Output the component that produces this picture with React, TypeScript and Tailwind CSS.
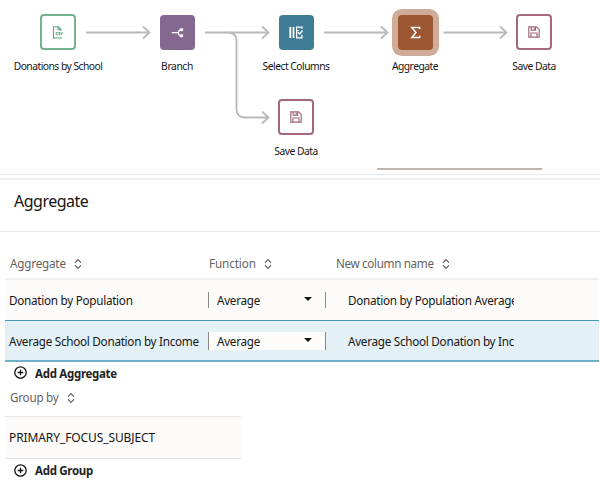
import React from 'react';
import clsx from 'clsx';

interface FlowNodeProps {
  label: string;
  position: string;
  box: string;
  tracking: string;
  children: React.ReactNode;
}

const FlowNode: React.FC<FlowNodeProps> = ({ label, position, box, tracking, children }) => (
  <div className={clsx('absolute w-[120px] flex flex-col items-center', position)}>
    <div className={clsx('rounded-[4px] flex items-center justify-center', box)}>{children}</div>
    <div className={clsx('mt-[9px] text-[10.3px] leading-[14px] text-[#161513] whitespace-nowrap', tracking)}>{label}</div>
  </div>
);

const SaveIcon: React.FC = () => (
  <svg width="12" height="12" viewBox="0 0 12 12" fill="none" stroke="#a06a7a" strokeWidth="1.2">
    <path d="M.8.8h7.800l2.600 2.600v7.800H.8z" />
    <path d="M3.200 1v3.200h4.400V1M3 11V7h6v4M6.300 1.600v1.600" />
  </svg>
);

const CsvIcon: React.FC = () => (
  <svg width="12" height="13" viewBox="0 0 12 13" fill="none" stroke="#5fa67c" strokeWidth="1.1">
    <path d="M9 11v1H1.500V.8h4.800L9 3.500V5M6 1v2.800h3" />
    <path d="M5.600 6.500H4.100v2.200h1.500M8 6.500H6.700v1h1.200v1.200H6.500M8.800 6.300l.8 2.300.9-2.300" strokeWidth="1" />
  </svg>
);

const BranchIcon: React.FC = () => (
  <svg width="13" height="12" viewBox="0 0 13 12" fill="none" stroke="#fff" strokeWidth="1.2">
    <path d="M.8 5.700h6.700M10 2.800H9L7.500 4.500v2.800L9 8.900h1" />
    <path d="M9.500 1.500h2.300v2.400H9.500zM9.500 7.600h2.300V10H9.500z" fill="#fff" strokeWidth=".5" />
  </svg>
);

const ColumnsIcon: React.FC = () => (
  <svg width="14" height="13" viewBox="0 0 14 13" fill="none" stroke="#fff" strokeWidth="1.2">
    <path d="M1.300 1v11M4.500 1v11" strokeWidth="1.800" />
    <path d="M13 3V1.200H7.600v10.600H13V9M7.600 4.500h2" />
    <path d="M8.600 6l2.200 2 2.800-3.500" strokeWidth="1.400" />
  </svg>
);

const SigmaIcon: React.FC = () => (
  <svg width="11" height="13" viewBox="0 0 11 13" fill="none" stroke="#fff" strokeWidth="1.500">
    <path d="M9.700 3V1.500H1.800L6 6.400l-4.200 5h7.900V9.800" />
  </svg>
);

const SortIcon: React.FC = () => (
  <svg width="8" height="10" viewBox="0 0 8 10" fill="none" stroke="#55524f" strokeWidth="1.1">
    <path d="M1 3.700l3-3 3 3M1 6.300l3 3 3-3" />
  </svg>
);

const AddButton: React.FC<{ label: string; className: string }> = ({ label, className }) => (
  <button className={clsx('flex items-center pl-[14px]', className)}>
    <svg className="-mt-[2px]" width="13" height="13" viewBox="0 0 13 13" fill="none" stroke="#161513" strokeWidth="1.3">
      <circle cx="6.500" cy="6.500" r="5.700" />
      <path d="M6.500 3.700v5.600M3.700 6.500h5.600" />
    </svg>
    <span className="ml-[8px] text-[11.5px] font-bold text-[#252321] whitespace-nowrap">{label}</span>
  </button>
);

const HeaderCell: React.FC<{ label: string; className: string }> = ({ label, className }) => (
  <div className={clsx('flex items-center gap-[8px] text-[11.7px] text-[#65625f] whitespace-nowrap', className)}>
    <span>{label}</span>
    <SortIcon />
  </div>
);

const ROWS = [
  { name: 'Donation by Population', fn: 'Average', column: 'Donation by Population Average', selected: false },
  { name: 'Average School Donation by Income', fn: 'Average', column: 'Average School Donation by Inc', selected: true },
];

const App: React.FC = () => {
  return (
    <div className="w-[600px] h-[489px] bg-white overflow-hidden font-['Noto_Sans',sans-serif] text-[#161513]">
      {/* Pipeline canvas */}
      <div className="relative h-[174px]">
        <svg className="absolute left-0 top-0" width="600" height="174" fill="none" stroke="#bababa" strokeWidth="1.8">
          <path d="M86 32.500h63M143 26.500l6.500 6-6.500 6" />
          <path d="M205 32.500h63M262 26.500l6.500 6-6.500 6" />
          <path d="M228 32.500q8.500 0 8.500 8.500v68q0 8.500 8.500 8.500h23M262 111.500l6.500 6-6.500 6" />
          <path d="M324 32.500h63M381 26.500l6.500 6-6.500 6" />
          <path d="M443.500 32.500h63M500 26.500l6.500 6-6.500 6" />
        </svg>
        <FlowNode label="Donations by School" position="left-[-2px] top-[14px]" box="size-[36px] border-2 border-[#74b28d]" tracking="tracking-[-0.52px]"><CsvIcon /></FlowNode>
        <FlowNode label="Branch" position="left-[117px] top-[15px]" box="size-[35px] bg-[#856890]" tracking="tracking-[-0.4px]"><BranchIcon /></FlowNode>
        <FlowNode label="Select Columns" position="left-[236px] top-[15px]" box="size-[35px] bg-[#417c97]" tracking="tracking-[-0.5px]"><ColumnsIcon /></FlowNode>
        <FlowNode label="Aggregate" position="left-[355px] top-[15px]" box="size-[35px] bg-[#9b5632] ring-[6px] ring-[#d0ab9a]" tracking="tracking-[-0.5px]"><SigmaIcon /></FlowNode>
        <FlowNode label="Save Data" position="left-[474px] top-[14px]" box="size-[36px] border-2 border-[#a5697b]" tracking="tracking-[-0.5px]"><SaveIcon /></FlowNode>
        <FlowNode label="Save Data" position="left-[236px] top-[99px]" box="size-[36px] border-2 border-[#a5697b]" tracking="tracking-[-0.5px]"><SaveIcon /></FlowNode>
        <div className="absolute left-[377px] top-[168px] w-[165px] h-[2px] bg-[#bdb5b0]" />
      </div>

      {/* Panel title */}
      <div className="h-[4px] border-t border-[#e4e6e8]" />
      <div className="h-[54px] border-t-2 border-b border-t-[#eeeff1] border-b-[#e4e6e8] px-[14px] pt-[9px]">
        <h1 className="text-[16px] leading-[24px] tracking-[-0.5px]">Aggregate</h1>
      </div>

      {/* Aggregate table */}
      <div className="ml-[5px] w-[594px]">
        <div className="flex h-[48px] pt-[15px] border-b-2 border-[#f0f0f0]">
          <HeaderCell label="Aggregate" className="w-[199px] h-[33px] pl-[5px] tracking-[-0.2px]" />
          <HeaderCell label="Function" className="w-[127px] h-[33px] pl-[5px] tracking-[-0.1px]" />
          <HeaderCell label="New column name" className="h-[33px] pl-[5px] tracking-[-0.35px]" />
        </div>
        {ROWS.map((row) => (
          <div
            key={row.name}
            className={clsx(
              'flex items-center text-[11.7px] whitespace-nowrap tracking-[-0.27px]',
              row.selected ? 'h-[42px] bg-[#e3f1f7] border-t border-b-2 border-t-[#4399b5] border-b-[#6fb0c5]' : 'h-[40px] bg-[#fcfbfa]'
            )}
          >
            <div className="w-[203px] pl-[4px] pt-[2px]">{row.name}</div>
            <div
              className={clsx(
                'w-[118px] border-x border-[#8b8784] flex items-center justify-between pl-[8px] pr-[13px]',
                row.selected ? 'h-[18px] mt-px bg-[#fdfcfb]' : 'h-[16px]'
              )}
            >
              <span className="pt-px">{row.fn}</span>
              <span className="-mt-[2px] border-x-[4px] border-x-transparent border-t-[4px] border-t-[#161513]" />
            </div>
            <div className="ml-[17px] pl-[5px] pt-[2px] w-[171px] overflow-hidden">{row.column}</div>
          </div>
        ))}
      </div>
      <AddButton label="Add Aggregate" className="h-[23px] tracking-[-0.3px]" />

      {/* Group by table */}
      <div className="ml-[5px] w-[236px]">
        <HeaderCell label="Group by" className="h-[32px] pl-[5px] pb-[6px] border-b border-[#e8e8e8] tracking-[-0.25px]" />
        <div className="flex items-center h-[42px] pl-[4px] bg-[#fcfbfa] border-b border-[#e2e1e0] text-[12px] tracking-[-0.1px]">PRIMARY_FOCUS_SUBJECT</div>
      </div>
      <AddButton label="Add Group" className="h-[24px] tracking-[-0.3px]" />
    </div>
  );
};

export default App;
